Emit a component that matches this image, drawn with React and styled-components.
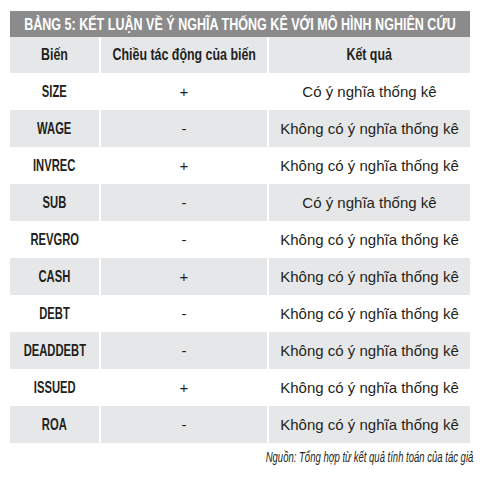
import React from "react";
import styled, { createGlobalStyle } from "styled-components";

const GlobalStyle = createGlobalStyle`
  html, body {
    margin: 0;
    padding: 0;
    background: #ffffff;
  }
  body {
    font-family: "Liberation Sans", Arial, sans-serif;
    color: #231f20;
  }
`;

const Page = styled.div`
  width: 484px;
  height: 477px;
  padding: 11px 14px 0 10px;
  box-sizing: border-box;
  overflow: hidden;
`;

// condensed look: the installed fonts have no narrow cut, so squeeze horizontally
const Squeeze = styled.span`
  display: inline-block;
  white-space: nowrap;
  transform: scaleX(${({ k }) => k});
  transform-origin: ${({ origin }) => origin || "center"};
`;

const Title = styled.div`
  height: 26px;
  background: #8b8b8c;
  color: #ffffff;
  font-weight: 700;
  font-size: 16.5px;
  display: flex;
  align-items: center;
  justify-content: center;
  white-space: nowrap;
`;

const Row = styled.div`
  display: grid;
  grid-template-columns: 89px 168px 1fr;
  height: ${({ h }) => h || 37}px;
  background: ${({ shaded }) => (shaded ? "#e6e7e8" : "#ffffff")};
`;

const Cell = styled.div`
  display: flex;
  align-items: center;
  justify-content: center;
  border-left: ${({ first }) => (first ? "none" : "2px solid #ffffff")};
  font-weight: ${({ bold }) => (bold ? 700 : 400)};
  font-size: ${({ size }) => size || 15}px;
  white-space: nowrap;
`;

const Source = styled.div`
  margin: 6px -3px 0 0;
  display: flex;
  justify-content: flex-end;
  font-style: italic;
  font-size: 14px;
`;

const rows = [
  ["SIZE", "+", "Có ý nghĩa thống kê"],
  ["WAGE", "-", "Không có ý nghĩa thống kê"],
  ["INVREC", "+", "Không có ý nghĩa thống kê"],
  ["SUB", "-", "Có ý nghĩa thống kê"],
  ["REVGRO", "-", "Không có ý nghĩa thống kê"],
  ["CASH", "+", "Không có ý nghĩa thống kê"],
  ["DEBT", "-", "Không có ý nghĩa thống kê"],
  ["DEADDEBT", "-", "Không có ý nghĩa thống kê"],
  ["ISSUED", "+", "Không có ý nghĩa thống kê"],
  ["ROA", "-", "Không có ý nghĩa thống kê"],
];

export default function App() {
  return (
    <>
      <GlobalStyle />
      <Page>
        <Title>
          <Squeeze k={0.76}>BẢNG 5: KẾT LUẬN VỀ Ý NGHĨA THỐNG KÊ VỚI MÔ HÌNH NGHIÊN CỨU</Squeeze>
        </Title>
        <Row shaded h={36}>
          <Cell first bold size={17}><Squeeze k={0.73}>Biến</Squeeze></Cell>
          <Cell bold size={17}><Squeeze k={0.73}>Chiều tác động của biến</Squeeze></Cell>
          <Cell bold size={17}><Squeeze k={0.73}>Kết quả</Squeeze></Cell>
        </Row>
        {rows.map((r, i) => (
          <Row key={r[0]} shaded={i % 2 === 1}>
            <Cell first bold size={16.5}><Squeeze k={0.68}>{r[0]}</Squeeze></Cell>
            <Cell>{r[1]}</Cell>
            <Cell>{r[2]}</Cell>
          </Row>
        ))}
        <Source>
          <Squeeze k={0.68} origin="right">Nguồn: Tổng hợp từ kết quả tính toán của tác giả</Squeeze>
        </Source>
      </Page>
    </>
  );
}
